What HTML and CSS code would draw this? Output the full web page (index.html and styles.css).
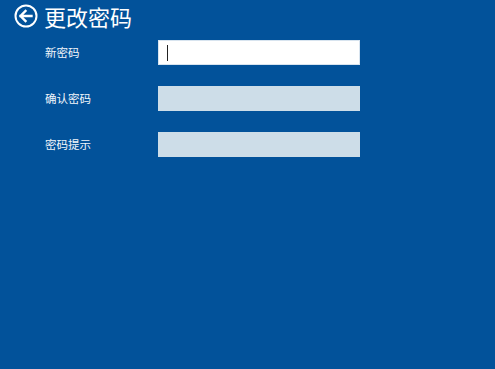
FILE: index.html
```html
<!DOCTYPE html>
<html lang="zh">
<head>
<meta charset="utf-8">
<link rel="stylesheet" href="styles.css">
</head>
<body>
<div class="page">
  <header class="header">
    <svg class="back" width="24" height="24" viewBox="0 0 24 24">
      <circle cx="12" cy="12" r="10.5" fill="none" stroke="#fff" stroke-width="2"/>
      <path d="M6.5 12 H17.5 M11.5 7 L6.5 12 L11.5 17" fill="none" stroke="#fff" stroke-width="2.4" stroke-linecap="square"/>
    </svg>
    <h1 class="title">更改密码</h1>
  </header>
  <div class="form">
    <div class="row">
      <label class="label">新密码</label>
      <div class="field field-active"><span class="caret"></span></div>
    </div>
    <div class="row">
      <label class="label">确认密码</label>
      <div class="field field-disabled"></div>
    </div>
    <div class="row">
      <label class="label">密码提示</label>
      <div class="field field-disabled"></div>
    </div>
  </div>
</div>
</body>
</html>
```
FILE: styles.css
```css
html, body {
  margin: 0;
  padding: 0;
  background: #02529a;
  height: 100%;
}
.page {
  font-family: "Noto Sans CJK SC", "Noto Sans", sans-serif;
  color: #fff;
}
.header {
  display: flex;
  align-items: flex-start;
  gap: 6px;
  padding-left: 14px;
  height: 32px;
}
.back {
  display: block;
  flex: none;
  margin-top: 4px;
}
.title {
  margin: 0;
  font-size: 22px;
  font-weight: 400;
  line-height: 32px;
}
.form {
  display: flex;
  flex-direction: column;
  gap: 21px;
  margin-top: 8px;
  padding-left: 45px;
}
.row {
  display: flex;
  align-items: center;
}
.label {
  width: 113px;
  font-size: 11.5px;
  line-height: 17px;
  color: #f2f6fa;
}
.field {
  width: 202px;
  height: 25px;
  box-sizing: border-box;
  display: flex;
  align-items: center;
  padding-left: 8px;
}
.field-active {
  background: #ffffff;
  border: 1px solid #d8e4ef;
}
.field-disabled {
  background: #cddde8;
}
.caret {
  width: 1px;
  height: 16px;
  background: #222;
}
```
